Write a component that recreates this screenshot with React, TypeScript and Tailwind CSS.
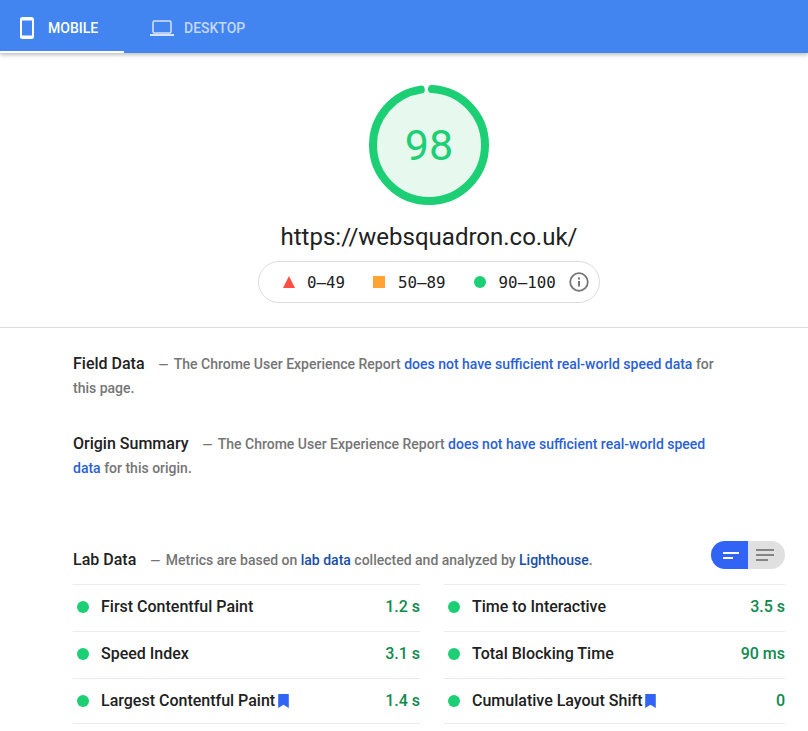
const metricsLeft = [
  { name: "First Contentful Paint", value: "1.2 s" },
  { name: "Speed Index", value: "3.1 s" },
  { name: "Largest Contentful Paint", value: "1.4 s", core: true },
];

const metricsRight = [
  { name: "Time to Interactive", value: "3.5 s" },
  { name: "Total Blocking Time", value: "90 ms" },
  { name: "Cumulative Layout Shift", value: "0", core: true },
];

const Bookmark = () => (
  <svg width="11" height="14" viewBox="0 0 11 14" className="ml-[3px] shrink-0">
    <path d="M.8 0h9.4a.6.6 0 0 1 .6.6V14L5.5 10.8.2 14V.6A.6.6 0 0 1 .8 0z" fill="#3164f4" />
  </svg>
);

const Dash = () => <span className="mr-[2px] text-[13px] leading-none">—</span>;

const MetricColumn = ({ rows }: { rows: typeof metricsLeft }) => (
  <div className="border-b border-[#ebebeb]">
    {rows.map((row, i) => (
      <div
        key={row.name}
        className={`flex items-center border-t border-[#ebebeb] pl-1 ${i === 2 ? "h-[45px]" : "h-[47px] pb-[2px]"}`}
      >
        <span className="h-3 w-3 shrink-0 rounded-full bg-[#1ccf74]" />
        <span className="ml-3 text-base font-medium text-[#212121]">{row.name}</span>
        {row.core && <Bookmark />}
        <span className="ml-auto text-base font-medium text-[#0d8a4e]">{row.value}</span>
      </div>
    ))}
  </div>
);

export default function App() {
  return (
    <div className="h-[731px] overflow-hidden bg-white font-['Roboto',sans-serif]">
      {/* Tabs */}
      <div className="flex h-[53px] bg-[#4285f0] shadow-[0_2px_4px_rgba(0,0,0,0.25)]">
        <div className="flex w-[124px] items-center border-b-2 border-white pl-5 pt-[5px]">
          <svg width="14" height="22" viewBox="0 0 14 22" fill="none">
            <rect x="1" y="1" width="12" height="20" rx="1.5" stroke="#fff" strokeWidth="2" />
            <rect x="1" y="1" width="12" height="2.5" fill="#fff" />
            <rect x="1" y="18.5" width="12" height="2.5" fill="#fff" />
          </svg>
          <span className="ml-[14px] text-sm font-medium text-white">MOBILE</span>
        </div>
        <div className="flex items-center pl-[26px] pt-[3px]">
          <svg width="24" height="16" viewBox="0 0 24 16" fill="none">
            <rect x="3" y="1" width="18" height="12" rx="1.5" stroke="#d6e4fc" strokeWidth="1.5" />
            <rect x="0" y="14" width="24" height="2" fill="#d6e4fc" />
          </svg>
          <span className="ml-[10px] text-sm font-medium text-[#c3d8fb]">DESKTOP</span>
        </div>
      </div>

      {/* Score */}
      <div className="flex h-[275px] flex-col items-center border-b border-[#dcdcdc] pl-[50px] pt-8">
        <div className="relative h-[120px] w-[120px]">
          <svg width="120" height="120" viewBox="0 0 120 120" className="-rotate-90">
            <circle cx="60" cy="60" r="56" fill="#e7f9ef" />
            <circle
              cx="60"
              cy="60"
              r="56"
              fill="none"
              stroke="#1ccf74"
              strokeWidth="8"
              strokeLinecap="round"
              strokeDasharray="340 352"
              strokeDashoffset="-3"
            />
          </svg>
          <span className="absolute inset-0 flex items-center justify-center text-[43px] font-normal text-[#1ccf74]">
            98
          </span>
        </div>
        <div className="mt-4 text-2xl leading-[32px] text-[#212121]">https://websquadron.co.uk/</div>
        <div className="mt-2 flex h-[42px] w-[342px] items-center rounded-full border border-[#dcdcdc] pl-6 font-['DejaVu_Sans_Mono',monospace] text-[15.8px] text-[#212121]">
          <svg width="12" height="12" viewBox="0 0 12 12">
            <path d="M6 0l6 12H0z" fill="#ff4e42" />
          </svg>
          <span className="ml-3 pt-[2px]">0–49</span>
          <span className="ml-7 h-3 w-3 bg-[#ffa333]" />
          <span className="ml-[13px] pt-[2px]">50–89</span>
          <span className="ml-7 h-3 w-3 rounded-full bg-[#1ccf74]" />
          <span className="ml-[13px] pt-[2px]">90–100</span>
          <svg width="20" height="20" viewBox="0 0 20 20" fill="none" className="ml-[13px]">
            <circle cx="10" cy="10" r="8.8" stroke="#757575" strokeWidth="1.8" />
            <rect x="9" y="9" width="2" height="5.5" fill="#757575" />
            <rect x="9" y="5.5" width="2" height="2" fill="#757575" />
          </svg>
        </div>
      </div>

      {/* Field data */}
      <div className="pl-[73px] pr-[90px] pt-6 text-sm font-medium leading-6 text-[#757575]">
        <p>
          <span className="mr-[14px] text-base leading-none text-[#212121]">Field Data</span>
          <Dash /> The Chrome User Experience Report{" "}
          <span className="text-[#2a5fd6]">does not have sufficient real-world speed data</span> for this page.
        </p>
        <p className="mt-8">
          <span className="mr-[14px] text-base leading-none text-[#212121]">Origin Summary</span>
          <Dash /> The Chrome User Experience Report{" "}
          <span className="text-[#2a5fd6]">does not have sufficient real-world speed data</span> for this origin.
        </p>
      </div>

      {/* Lab data */}
      <div className="pl-[73px] pr-[23px]">
        <div className="mt-[61px] flex h-[28px] items-center text-sm font-medium text-[#757575]">
          <div className="flex items-center pt-[10px]">
            <span className="mr-[14px] text-base text-[#212121]">Lab Data</span>
            <span>
              <Dash /> Metrics are based on <span className="text-[#174ea6]">lab data</span> collected and analyzed by{" "}
              <span className="text-[#174ea6]">Lighthouse</span>.
            </span>
          </div>
          <div className="ml-auto flex h-7 w-[74px] overflow-hidden rounded-full">
            <div className="flex w-[37px] flex-col items-end justify-center gap-[3px] bg-[#3164f4] pr-[9px]">
              <span className="h-0.5 w-4 self-end bg-white" />
              <span className="mr-[6px] h-0.5 w-[10px] bg-white" />
            </div>
            <div className="flex w-[37px] flex-col items-start justify-center gap-[3px] bg-[#e0e0e0] pl-2">
              <span className="h-0.5 w-[18px] bg-[#858585]" />
              <span className="h-0.5 w-[18px] bg-[#858585]" />
              <span className="h-0.5 w-3 bg-[#858585]" />
            </div>
          </div>
        </div>
        <div className="mt-[15px] grid grid-cols-[347px_341px] gap-x-6">
          <MetricColumn rows={metricsLeft} />
          <MetricColumn rows={metricsRight} />
        </div>
      </div>
    </div>
  );
}
